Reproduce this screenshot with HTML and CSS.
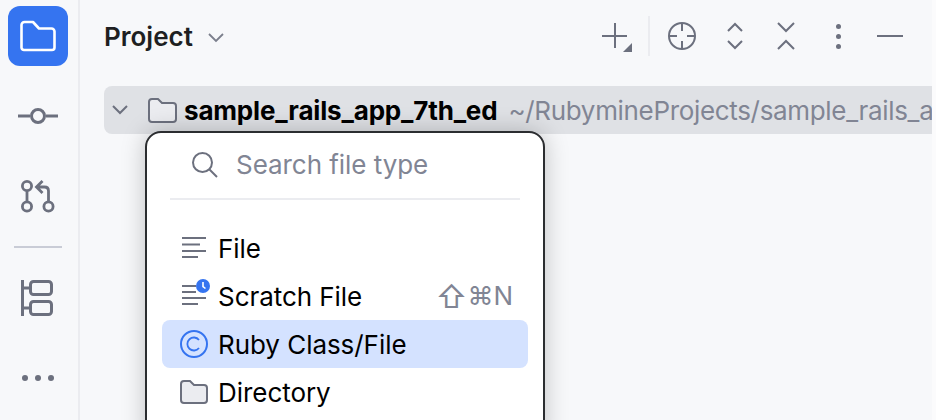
FILE: index.html
```html
<!DOCTYPE html>
<html lang="en">
<head>
    <meta charset="UTF-8">
    <title>Project</title>
    <link rel="stylesheet" href="styles.css">
</head>
<body>
    <div class="app">
        <nav class="sidebar">
            <div class="side-btn active">
                <svg width="36" height="32" viewBox="0 0 36 32" fill="none" stroke="#fff" stroke-width="2.6" stroke-linejoin="round"><path d="M1.500 5a3 3 0 0 1 3-3h8.500l6 6.500h12.500a3 3 0 0 1 3 3v16a2.500 2.500 0 0 1-2.500 2.500h-28a2.500 2.500 0 0 1-2.500-2.500z"/></svg>
            </div>
            <div class="side-btn commit">
                <svg width="40" height="16" viewBox="0 0 40 16" fill="none" stroke="#6c707e" stroke-width="3"><path d="M0 8h12M28 8h12"/><circle cx="20" cy="8" r="6.500"/></svg>
            </div>
            <div class="side-btn pull">
                <svg width="34" height="34" viewBox="0 0 34 34" fill="none" stroke="#6c707e" stroke-width="2.800"><circle cx="6" cy="6" r="4.600"/><circle cx="6" cy="26.500" r="4.600"/><circle cx="27.500" cy="26.500" r="4.600"/><path d="M6 11v11M27.500 22v-11q0-4-4-4h-7.500M21.500 1l-6 6 6 6"/></svg>
            </div>
            <div class="side-sep"></div>
            <div class="side-btn structure">
                <svg width="34" height="36" viewBox="0 0 34 36" fill="none" stroke="#6c707e" stroke-width="3"><path d="M1.500 0v36M1.500 8h8M1.500 28h8"/><rect x="9.500" y="1.500" width="21" height="13" rx="3"/><rect x="9.500" y="21.500" width="21" height="13" rx="3"/></svg>
            </div>
            <div class="side-btn more">
                <span class="dot"></span><span class="dot"></span><span class="dot"></span>
            </div>
        </nav>

        <main class="panel">
            <header class="panel-head">
                <h1>Project</h1>
                <svg class="title-arrow" width="16" height="10" viewBox="0 0 16 10" fill="none" stroke="#7b7f8c" stroke-width="1.800"><path d="M1 1l7 7 7-7"/></svg>
                <div class="tools">
                    <svg class="tool-add" width="30" height="32" viewBox="0 0 30 32" fill="none" stroke="#6c707e" stroke-width="2"><path d="M13 3v25M0 16h25"/><path d="M30 23v9h-9z" fill="#6c707e" stroke="none"/></svg>
                    <span class="tool-sep"></span>
                    <svg class="tool-locate" width="30" height="30" viewBox="0 0 30 30" fill="none" stroke="#6c707e" stroke-width="2"><circle cx="15" cy="15" r="13"/><path d="M15 2v8M15 20v8M2 15h8M20 15h8"/></svg>
                    <svg class="tool-expand" width="18" height="28" viewBox="0 0 18 28" fill="none" stroke="#6c707e" stroke-width="2"><path d="M2 9l7-7 7 7M2 19l7 7 7-7"/></svg>
                    <svg class="tool-collapse" width="18" height="28" viewBox="0 0 18 28" fill="none" stroke="#6c707e" stroke-width="2"><path d="M1 1l8 8 8-8M1 27l8-8 8 8"/></svg>
                    <span class="tool-kebab"><span class="dot small"></span><span class="dot small"></span><span class="dot small"></span></span>
                    <span class="tool-hide"></span>
                </div>
            </header>

            <div class="tree-row">
                <svg class="tree-arrow" width="16" height="10" viewBox="0 0 16 10" fill="none" stroke="#6c707e" stroke-width="2"><path d="M1 1l7 7 7-7"/></svg>
                <svg class="tree-folder" width="29" height="25" viewBox="0 0 29 25" fill="#ebecf0" stroke="#6c707e" stroke-width="2"><path d="M1 4a3 3 0 0 1 3-3h6l4 4h11a3 3 0 0 1 3 3v13a3 3 0 0 1-3 3h-21a3 3 0 0 1-3-3z"/></svg>
                <span class="tree-name">sample_rails_app_7th_ed</span>
                <span class="tree-path">~/RubymineProjects/sample_rails_a</span>
            </div>
        </main>

        <div class="popup">
            <div class="search">
                <svg width="28" height="28" viewBox="0 0 28 28" fill="none" stroke="#6c707e" stroke-width="2"><circle cx="11.500" cy="11.500" r="9.500"/><path d="M18.500 18.500l7.500 7.500"/></svg>
                <span>Search file type</span>
            </div>
            <ul class="menu">
                <li class="menu-item">
                    <svg class="item-icon lines" width="24" height="22" viewBox="0 0 24 22" fill="none" stroke="#6c707e" stroke-width="2"><path d="M0 1h24M0 7.500h18M0 14h24M0 20h16"/></svg>
                    File
                </li>
                <li class="menu-item">
                    <svg class="item-icon lines" width="28" height="32" viewBox="0 0 28 32" fill="none"><path d="M0 6h14M0 12h14M0 18h24M0 24h16" stroke="#6c707e" stroke-width="2"/><circle cx="21" cy="6" r="7" fill="#3574f0"/><path d="M21 2v4.500l2.500 2" stroke="#fff" stroke-width="1.600"/></svg>
                    Scratch File
                    <span class="shortcut"><span class="shift">⇧</span>⌘N</span>
                </li>
                <li class="menu-item selected">
                    <svg class="item-icon" width="28" height="28" viewBox="0 0 28 28" fill="none" stroke="#3574f0" stroke-width="2"><circle cx="14" cy="14" r="13"/><path d="M19 10a6.500 6.500 0 1 0 0 8" stroke-width="1.800"/></svg>
                    Ruby Class/File
                </li>
                <li class="menu-item">
                    <svg class="item-icon" width="28" height="24" viewBox="0 0 28 24" fill="#ebecf0" stroke="#6c707e" stroke-width="2"><path d="M1 4a3 3 0 0 1 3-3h6l4 4h10a3 3 0 0 1 3 3v12a3 3 0 0 1-3 3h-20a3 3 0 0 1-3-3z"/></svg>
                    Directory
                </li>
            </ul>
        </div>
    </div>
</body>
</html>
```

FILE: styles.css
```css
* {
    box-sizing: border-box;
}

html, body {
    margin: 0;
    height: 100%;
    overflow: hidden;
}

body {
    font-family: Inter, "Liberation Sans", sans-serif;
    background-color: #fbfbfc;
    color: #000;
}

svg {
    flex-shrink: 0;
    overflow: visible;
}

.app {
    position: relative;
    display: flex;
    width: 936px;
    height: 420px;
    overflow: hidden;
}

.sidebar {
    width: 80px;
    flex-shrink: 0;
    display: flex;
    flex-direction: column;
    align-items: center;
    padding-top: 6px;
    padding-right: 2px;
    background-color: #f7f8fa;
    border-right: 2px solid #ebecf0;
}

.side-btn {
    display: flex;
    align-items: center;
    justify-content: center;
}

.side-btn.active {
    width: 60px;
    height: 60px;
    border-radius: 12px;
    background-color: #3574f0;
}

.side-btn.commit {
    margin-top: 42px;
}

.side-btn.pull {
    margin-top: 56px;
}

.side-sep {
    width: 48px;
    height: 2px;
    margin-top: 32px;
    background-color: #c9ccd6;
}

.side-btn.structure {
    margin-top: 32px;
}

.side-btn.more {
    gap: 7px;
    margin-top: 59px;
}

.dot {
    display: block;
    width: 6px;
    height: 6px;
    border-radius: 50%;
    background-color: #6c707e;
}

.dot.small {
    width: 5px;
    height: 5px;
}

.panel {
    width: 852px;
    flex-shrink: 0;
    padding-left: 24px;
    background-color: #f7f8fa;
}

.panel-head {
    display: flex;
    align-items: center;
    height: 86px;
    padding-bottom: 14px;
}

h1 {
    margin: 0;
    font-size: 26px;
    font-weight: 600;
    color: #1e1f22;
}

.title-arrow {
    margin-left: 15px;
    margin-top: 4px;
}

.tools {
    display: flex;
    align-items: center;
    margin-left: auto;
    padding-right: 29px;
}

.tool-sep {
    width: 2px;
    height: 40px;
    margin: 0 17px 0 16px;
    background-color: #ebecf0;
}

.tool-locate {
    margin-right: 29px;
}

.tool-expand {
    margin-right: 33px;
}

.tool-kebab {
    display: flex;
    flex-direction: column;
    gap: 5px;
    margin: 0 36px 0 41px;
}

.tool-hide {
    width: 26px;
    height: 2px;
    background-color: #6c707e;
}

.tree-row {
    display: flex;
    align-items: center;
    height: 48px;
    padding-left: 8px;
    overflow: hidden;
    white-space: nowrap;
    border-radius: 8px 0 0 8px;
    background-color: #dfe1e5;
}

.tree-folder {
    margin-left: 20px;
}

.tree-name {
    margin-left: 7px;
    font-size: 26px;
    font-weight: 700;
    letter-spacing: -0.17px;
}

.tree-path {
    margin-left: 11px;
    font-size: 26px;
    letter-spacing: -0.33px;
    color: #818594;
}

.popup {
    position: absolute;
    left: 145px;
    top: 131px;
    width: 400px;
    height: 320px;
    padding: 0 15px;
    background-color: #fff;
    border: 2px solid #2b2d30;
    border-radius: 16px;
    box-shadow: 0 0 24px rgba(0, 0, 0, 0.22);
}

.search {
    display: flex;
    align-items: center;
    gap: 17px;
    height: 67px;
    margin: 0 8px;
    padding: 0 0 2px 21px;
    border-bottom: 2px solid #ebecf0;
    font-size: 26px;
    letter-spacing: -0.05px;
    color: #818594;
}

.menu {
    list-style: none;
    margin: 24px 0 0;
    padding: 0;
}

.menu-item {
    position: relative;
    display: flex;
    align-items: center;
    height: 48px;
    padding-left: 56px;
    border-radius: 8px;
    font-size: 26px;
    letter-spacing: -0.05px;
}

.menu-item.selected {
    background-color: #d4e2ff;
}

.item-icon {
    position: absolute;
    left: 18px;
    top: 50%;
    transform: translateY(-50%);
}

.item-icon.lines {
    left: 20px;
}

.shortcut {
    display: flex;
    align-items: center;
    margin-left: auto;
    padding-right: 15px;
    line-height: 1;
    color: #818594;
}

.shift {
    font-size: 31px;
}
```
